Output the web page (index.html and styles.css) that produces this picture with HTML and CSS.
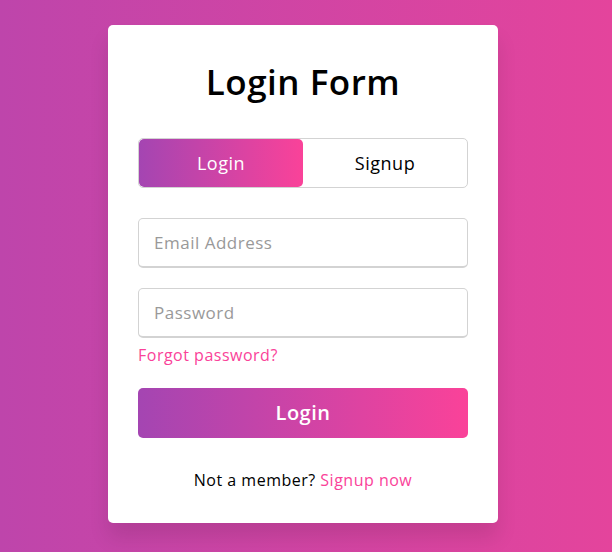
FILE: index.html
```html
<!DOCTYPE html>
<html lang="en">
<head>
  <meta charset="UTF-8">
  <meta name="viewport" content="width=device-width, initial-scale=1.0">
  <title>Login Form</title>
  <link rel="stylesheet" href="styles.css">
</head>
<body>
  <div class="wrapper">
    <div class="title">Login Form</div>

    <!-- Login / Signup switch -->
    <div class="slide-controls">
      <div class="slide active">Login</div>
      <div class="slide">Signup</div>
    </div>

    <form class="login-form" action="#">
      <div class="field">
        <input type="text" placeholder="Email Address" required>
      </div>
      <div class="field">
        <input type="password" placeholder="Password" required>
      </div>
      <div class="pass-link"><a href="#">Forgot password?</a></div>
      <div class="field">
        <button type="submit" class="btn">Login</button>
      </div>
      <div class="signup-link">Not a member? <a href="#">Signup now</a></div>
    </form>
  </div>
</body>
</html>
```

FILE: styles.css
```css
* {
  box-sizing: border-box;
}

body {
  margin: 0;
  height: 552px;
  padding: 0 6px 5px 0;
  display: flex;
  align-items: center;
  justify-content: center;
  font-family: "Open Sans", "DejaVu Sans", sans-serif;
  letter-spacing: 0.5px;
  background: linear-gradient(to right, #be45ab, #e4449c);
}

.wrapper {
  width: 390px;
  background: #fff;
  padding: 30px;
  border-radius: 5px;
  box-shadow: 0 15px 20px rgba(0,0,0,0.1);
}

.title {
  font-size: 35px;
  font-weight: 600;
  line-height: 53px;
  text-align: center;
  color: #000;
}

.slide-controls {
  display: flex;
  height: 50px;
  margin: 30px 0 10px 0;
  border: 1px solid lightgrey;
  border-radius: 5px;
  overflow: hidden;
}

.slide {
  flex: 1;
  display: flex;
  align-items: center;
  justify-content: center;
  font-size: 18px;
  font-weight: 500;
  color: #000;
}

.slide.active {
  color: #fff;
  border-radius: 5px;
  background: linear-gradient(to right, #a445b2, #fa4299);
}

.login-form {
  display: flow-root;
}

.field {
  height: 50px;
  margin-top: 20px;
}

.field input {
  width: 100%;
  height: 100%;
  padding-left: 15px;
  border: 1px solid lightgrey;
  border-bottom-width: 2px;
  border-radius: 5px;
  font-family: inherit;
  letter-spacing: inherit;
  font-size: 17px;
  outline: none;
}

.field input::placeholder {
  color: #999;
}

.pass-link {
  margin-top: 5px;
  font-size: 16px;
  line-height: 25px;
}

a {
  color: #fa4299;
  text-decoration: none;
}

.btn {
  width: 100%;
  height: 100%;
  border: none;
  border-radius: 5px;
  color: #fff;
  font-family: inherit;
  letter-spacing: inherit;
  font-size: 20px;
  font-weight: 600;
  cursor: pointer;
  background: linear-gradient(to right, #a445b2, #fa4299);
}

.signup-link {
  margin-top: 30px;
  text-align: center;
  font-size: 16px;
  line-height: 25px;
  color: #000;
}
```
